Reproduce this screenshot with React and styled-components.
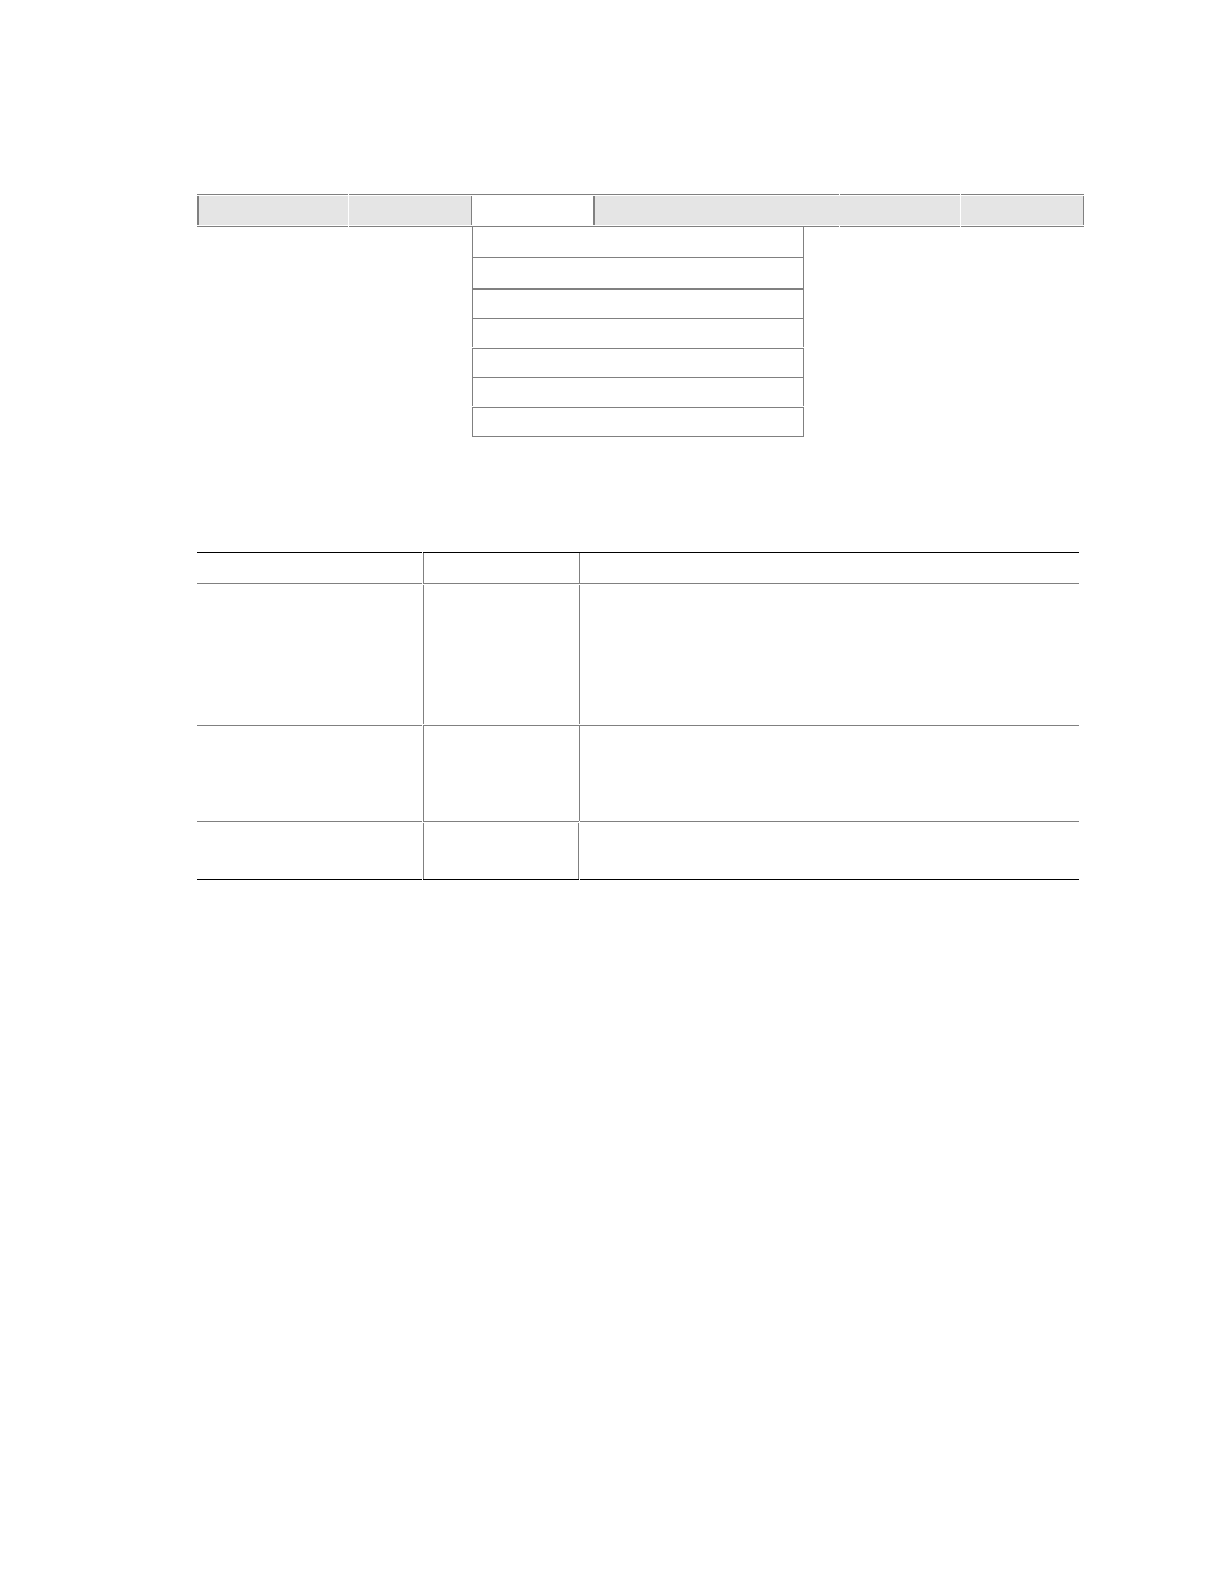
import React from 'react'
import styled, { createGlobalStyle } from 'styled-components'

const GlobalStyle = createGlobalStyle`
  * {
    box-sizing: border-box;
  }

  body {
    margin: 0;
    background: #ffffff;
    font-family: "Liberation Sans", Arial, sans-serif;
  }
`

const line = '#808080'

const Page = styled.main`
  padding: 194px 140px 194px 197px;
`

const MenuBar = styled.nav`
  display: grid;
  grid-template-columns: 152fr 123fr 121fr 247fr 121fr 123fr;
  height: 33px;
`

const MenuItem = styled.div`
  position: relative;
  margin-right: ${(props) => (props.$gap ? '1px' : '0')};
  padding: 1px 0;
  border: solid ${line};
  border-width: 1px 0;
`

const MenuButton = styled.button`
  display: block;
  width: ${(props) => (props.$joined ? 'calc(100% + 1px)' : '100%')};
  height: 29px;
  padding: 0;
  background: ${(props) => (props.$active ? '#ffffff' : '#e5e5e5')};
  border: solid ${line};
  border-width: 0 ${(props) => props.$right || 0}px 0 ${(props) => props.$left || 0}px;
  cursor: pointer;
`

const Dropdown = styled.ul`
  position: absolute;
  top: 100%;
  left: 0;
  width: 332px;
  margin: 1px 0 0;
  padding: 0;
  list-style: none;
`

const DropdownItem = styled.li`
  height: ${(props) => props.$height}px;
  margin-bottom: ${(props) => (props.$gap ? '1px' : '0')};
  border: solid ${line};
  border-width: ${(props) => props.$top || 0}px 1px ${(props) => props.$bottom || 0}px;
`

const DropdownButton = styled.button`
  display: block;
  width: 100%;
  height: 100%;
  padding: 0;
  background: #ffffff;
  border: 0;
  cursor: pointer;
`

const Table = styled.table`
  width: calc(100% - 5px);
  margin-top: 325px;
  table-layout: fixed;
  border-collapse: separate;
  border-spacing: 0;
`

const Row = styled.tr`
  height: ${(props) => props.$height}px;
`

const Cell = styled.td`
  padding: 0;
`

// each cell draws its own rules, so small breaks show where they meet
const CellBox = styled.div`
  display: flex;
  height: ${(props) => props.$height}px;
  margin-right: ${(props) => (props.$breakRight ? '1px' : '0')};
  margin-left: ${(props) => (props.$breakLeft ? '1px' : '0')};
  border-top: ${(props) => (props.$head ? '1px solid #000000' : '0')};
  border-bottom: 1px solid ${(props) => (props.$last ? '#000000' : line)};
`

const Rule = styled.div`
  width: 1px;
  margin-top: ${(props) => (props.$gapTop ? '1px' : '0')};
  margin-bottom: ${(props) => (props.$gapBottom ? '1px' : '0')};
  margin-left: ${(props) => (props.$end ? 'auto' : props.$outside ? '-1px' : '0')};
  background: ${line};
`

const menus = [
  { id: 1, left: 2, gap: true },
  { id: 2, right: 1 },
  { id: 3, active: true },
  { id: 4, left: 2, gap: true, joined: true },
  { id: 5, gap: true },
  { id: 6, right: 1 },
]

const options = [
  { id: 1, height: 31, bottom: 1 },
  { id: 2, height: 32, bottom: 2 },
  { id: 3, height: 29, bottom: 1 },
  { id: 4, height: 28, gap: true },
  { id: 5, height: 30, top: 1, bottom: 1 },
  { id: 6, height: 28, gap: true },
  { id: 7, height: 30, top: 1, bottom: 1 },
]

const rows = [
  { id: 1, height: 32, head: true },
  { id: 2, height: 142, gapTop: true, gapBottom: true },
  { id: 3, height: 96, split: true },
  { id: 4, height: 58, gapTop: true, split: true, last: true },
]

const App = () => {
  return (
    <>
      <GlobalStyle />
      <Page>
        <MenuBar>
          {menus.map((menu) => (
            <MenuItem key={menu.id} $gap={menu.gap}>
              <MenuButton
                type='button'
                aria-label={`Menu ${menu.id}`}
                $left={menu.left}
                $right={menu.right}
                $active={menu.active}
                $joined={menu.joined}
              />
              {menu.active && (
                <Dropdown>
                  {options.map((option) => (
                    <DropdownItem
                      key={option.id}
                      $height={option.height}
                      $top={option.top}
                      $bottom={option.bottom}
                      $gap={option.gap}
                    >
                      <DropdownButton type='button' aria-label={`Option ${option.id}`} />
                    </DropdownItem>
                  ))}
                </Dropdown>
              )}
            </MenuItem>
          ))}
        </MenuBar>

        <Table>
          <colgroup>
            <col style={{ width: `${(226 / 882) * 100}%` }} />
            <col style={{ width: `${(156 / 882) * 100}%` }} />
            <col />
          </colgroup>
          <tbody>
            {rows.map((row) => (
              <Row key={row.id} $height={row.height}>
                <Cell as={row.head ? 'th' : 'td'}>
                  <CellBox $height={row.height} $head={row.head} $last={row.last} $breakRight />
                </Cell>
                <Cell as={row.head ? 'th' : 'td'}>
                  <CellBox $height={row.height} $head={row.head} $last={row.last}>
                    <Rule $gapTop={row.gapTop} $gapBottom={row.gapBottom} />
                    {row.last && <Rule $gapTop $end />}
                  </CellBox>
                </Cell>
                <Cell as={row.head ? 'th' : 'td'}>
                  <CellBox
                    $height={row.height}
                    $head={row.head}
                    $last={row.last}
                    $breakLeft={row.split}
                  >
                    {!row.last && (
                      <Rule
                        $gapTop={row.gapTop}
                        $gapBottom={row.gapBottom}
                        $outside={row.split}
                      />
                    )}
                  </CellBox>
                </Cell>
              </Row>
            ))}
          </tbody>
        </Table>
      </Page>
    </>
  )
}

export default App
